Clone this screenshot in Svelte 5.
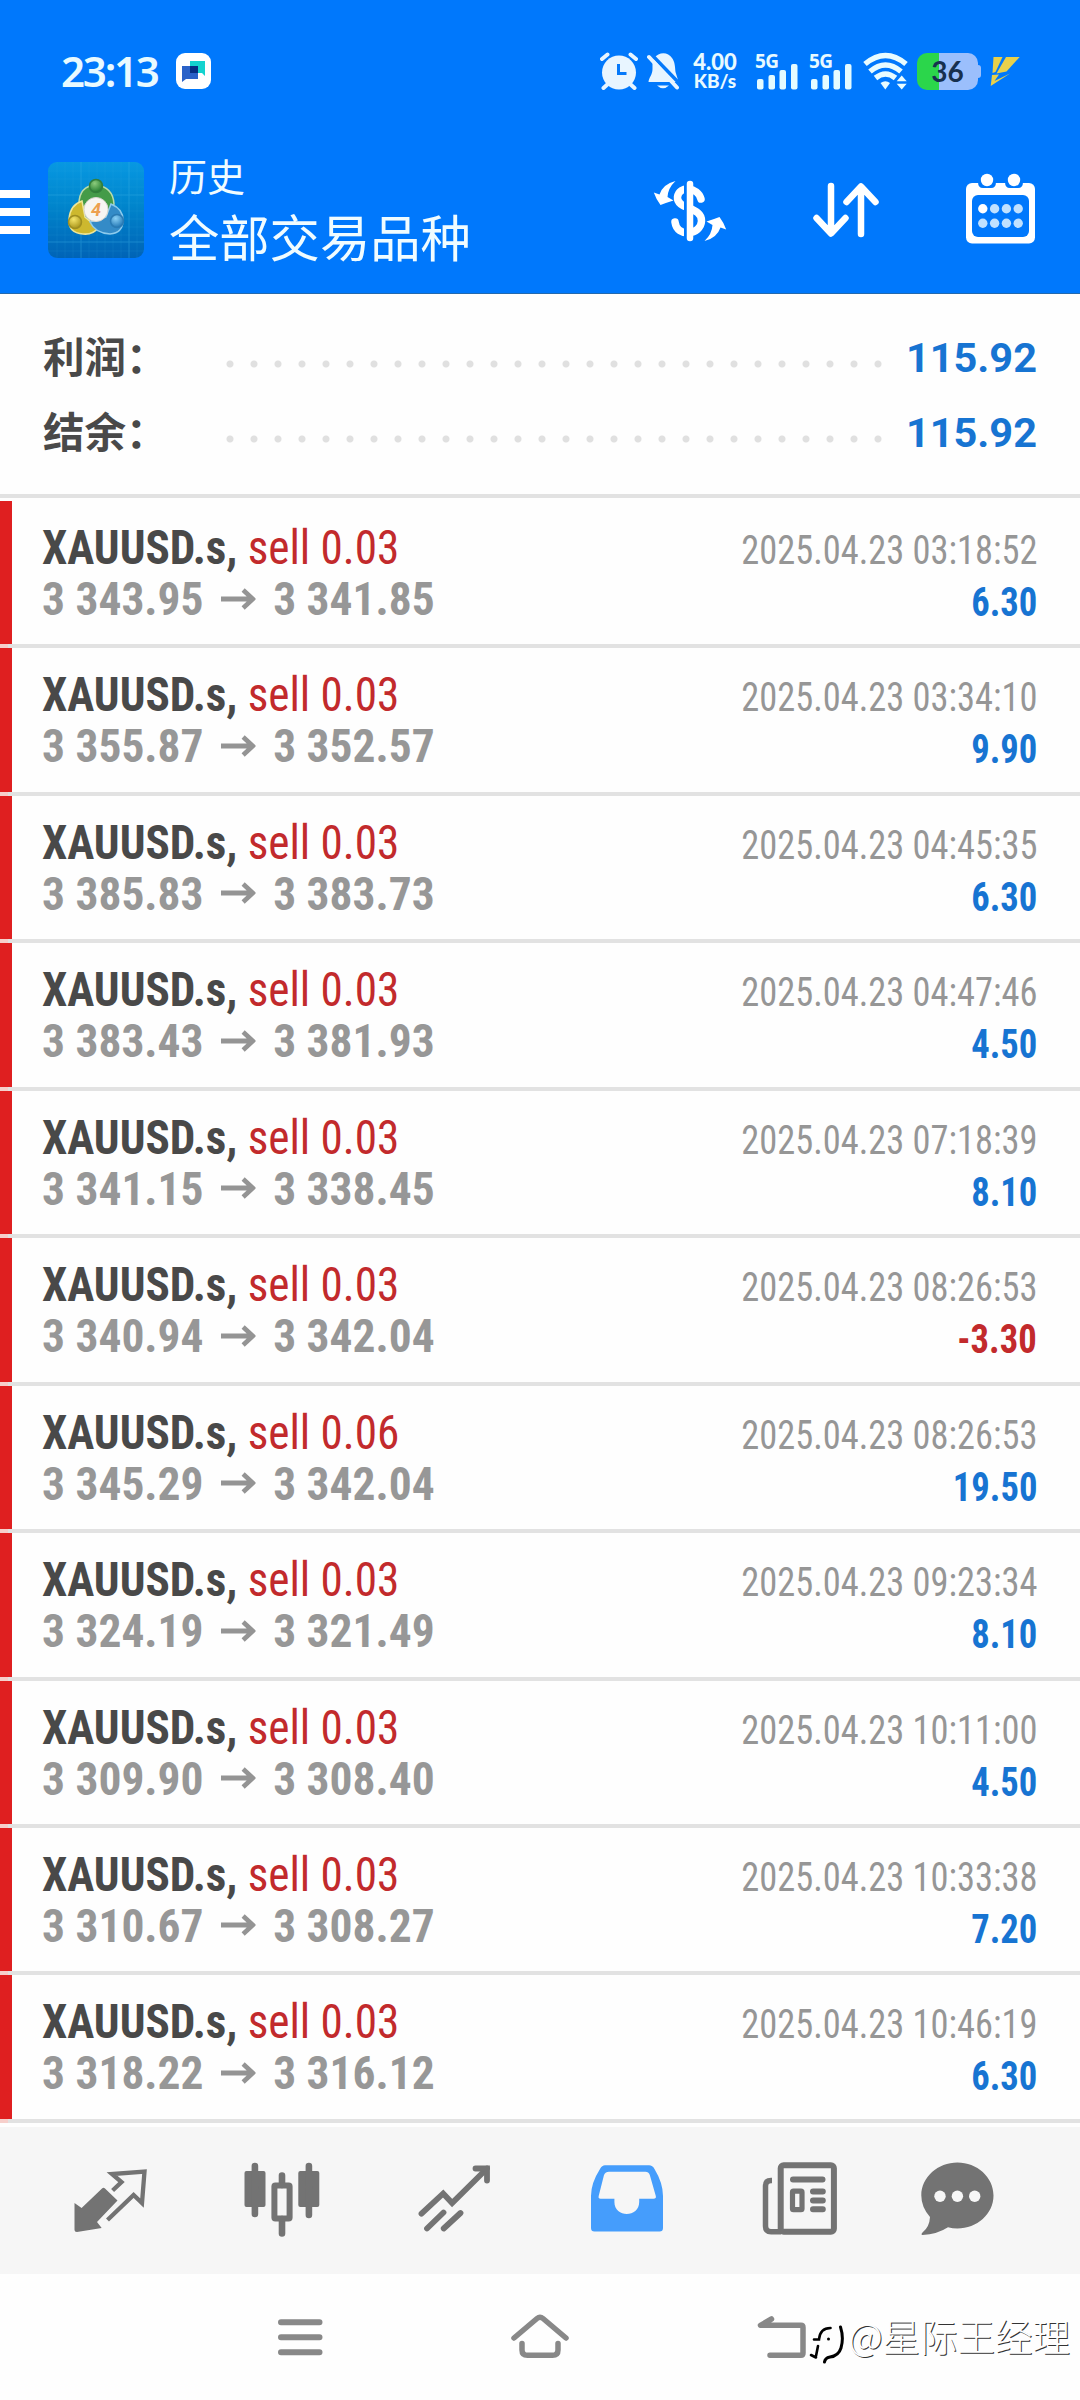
<script lang="ts">
  interface Deal {
    symbol: string;
    side: string;
    volume: string;
    open: string;
    close: string;
    time: string;
    profit: string;
  }

  const deal = (volume: string, open: string, close: string, time: string, profit: string): Deal => ({
    symbol: 'XAUUSD.s',
    side: 'sell',
    volume,
    open,
    close,
    time: `2025.04.23 ${time}`,
    profit,
  });

  const summary = [
    { label: '利润：', value: '115.92' },
    { label: '结余：', value: '115.92' },
  ];

  const deals: Deal[] = [
    deal('0.03', '3 343.95', '3 341.85', '03:18:52', '6.30'),
    deal('0.03', '3 355.87', '3 352.57', '03:34:10', '9.90'),
    deal('0.03', '3 385.83', '3 383.73', '04:45:35', '6.30'),
    deal('0.03', '3 383.43', '3 381.93', '04:47:46', '4.50'),
    deal('0.03', '3 341.15', '3 338.45', '07:18:39', '8.10'),
    deal('0.03', '3 340.94', '3 342.04', '08:26:53', '-3.30'),
    deal('0.06', '3 345.29', '3 342.04', '08:26:53', '19.50'),
    deal('0.03', '3 324.19', '3 321.49', '09:23:34', '8.10'),
    deal('0.03', '3 309.90', '3 308.40', '10:11:00', '4.50'),
    deal('0.03', '3 310.67', '3 308.27', '10:33:38', '7.20'),
    deal('0.03', '3 318.22', '3 316.12', '10:46:19', '6.30'),
  ];

  const calendarDots = [0, 1, 2, 3, 4, 5, 6, 7];
</script>

<div class="screen">
  <header class="header">
    <div class="status">
      <span class="status__clock">23:13</span>
      <svg class="status__app" width="35" height="36" viewBox="0 0 35 36">
        <rect width="35" height="36" rx="9" fill="#fff" />
        <path d="M14 8H29V23L26 20H14Z" fill="#14d3cf" />
        <path d="M6 13H22V26H10L6 29Z" fill="#2a62c8" />
        <path d="M14 13H22V20H14Z" fill="#062f83" />
      </svg>

      <div class="status__icons">
        <svg width="38" height="38" viewBox="600 52 38 38">
          <circle cx="619" cy="72.5" r="17" fill="#e8f5ff" />
          <path d="M602 59L607.5 54.5M630.5 54.5L636 59M603.500 88L609 83M634.500 88L629 83" stroke="#e8f5ff" stroke-width="4" stroke-linecap="round" />
          <path d="M618.500 64V73.500H626.500" fill="none" stroke="#0579fa" stroke-width="3" />
        </svg>
        <svg class="status__bell" width="32" height="38" viewBox="647 52 32 38">
          <path d="M654 58C659 51.500 668 51.500 672 58C675 62 675 67 675.500 72L678 80L676 82H648.500C649 77 652.500 75 652.500 69V64Z" fill="#e8f5ff" />
          <path d="M657 85.500H669Q663 91 657 85.500Z" fill="#e8f5ff" />
          <path d="M651 54L681 85" stroke="#0579fa" stroke-width="3.500" />
          <path d="M649 57L677 87.500" stroke="#e8f5ff" stroke-width="4" stroke-linecap="round" />
        </svg>
        <div class="status__speed">
          <span class="status__rate">4.00</span>
          <span class="status__unit">KB/s</span>
        </div>
        {#each [0, 1] as sim (sim)}
          <div class="status__sim">
            <span>5G</span>
            <svg width="44" height="38" viewBox="754 52 44 38" fill="#e4fbff">
              <rect x="757" y="79" width="6.500" height="10.500" rx="2" />
              <rect x="768.500" y="75" width="6.500" height="14.500" rx="2" />
              <rect x="779.500" y="70" width="6.500" height="19.500" rx="2" />
              <rect x="791" y="64" width="6.500" height="25.500" rx="2" />
            </svg>
          </div>
        {/each}
        <svg class="status__wifi" width="46" height="38" viewBox="862 52 46 38">
          <g fill="none" stroke="#e8fcff" stroke-width="5.500">
            <path d="M865 64Q885.500 47 906 64" />
            <path d="M870 71.500Q885.500 58.500 901 71.500" />
            <path d="M875.500 78Q885.500 70 895.500 78" />
          </g>
          <path d="M880.500 83Q885.500 79.500 890 83L885.300 89.500Z" fill="#e8fcff" />
          <path d="M896.700 81.300L901.700 75.500L906.700 81.300ZM896.700 83.800H906.700L901.700 89.500Z" fill="#e8fcff" />
        </svg>
        <div class="battery"><span>36</span></div>
        <svg class="status__bolt" width="30" height="31" viewBox="990 56 30 31" fill="#e8d04a">
          <path d="M993.500 57H1002.500L995.500 72L992.500 73Z" />
          <path d="M1006 57H1019.700L1006.500 71.500L996.500 73.500Z" />
          <path d="M992 75L999 74.500L994.500 81L1010 73.500L990.700 86Z" />
        </svg>
      </div>
    </div>

    <div class="toolbar">
      <div class="toolbar__menu"><i></i><i></i><i></i></div>
      <svg class="toolbar__logo" width="96" height="96" viewBox="0 0 96 96">
        <defs>
          <linearGradient id="tile" x1="0" y1="0" x2="0" y2="1">
            <stop offset="0" stop-color="#0798e2" />
            <stop offset="0.45" stop-color="#0085cc" />
            <stop offset="1" stop-color="#0063b6" />
          </linearGradient>
          <radialGradient id="green" cx="0.4" cy="0.3" r="0.7">
            <stop offset="0" stop-color="#8ccb7c" />
            <stop offset="1" stop-color="#237c2f" />
          </radialGradient>
          <radialGradient id="yellow" cx="0.4" cy="0.3" r="0.7">
            <stop offset="0" stop-color="#f5e56a" />
            <stop offset="1" stop-color="#a9951b" />
          </radialGradient>
          <radialGradient id="blue" cx="0.4" cy="0.3" r="0.7">
            <stop offset="0" stop-color="#8bd0f5" />
            <stop offset="1" stop-color="#2378b6" />
          </radialGradient>
        </defs>
        <rect width="96" height="96" rx="9" fill="url(#tile)" />
        <path d="M33 0V96M81 0V96M0 33H96M0 80H96" stroke="#3cb2e6" stroke-width="1" opacity="0.4" />
        <path d="M9 0V96M17 0V96M25 0V96M41 0V96M49 0V96M57 0V96M65 0V96M73 0V96M89 0V96M0 9H96M0 17H96M0 25H96M0 41H96M0 49H96M0 57H96M0 65H96M0 73H96M0 89H96" stroke="#3cb2e6" stroke-width="0.6" opacity="0.2" />
        <g stroke-width="1.500">
          <path d="M31 42Q31 24 48 23Q65 25 66 42L61 52L48 42L37 46Z" fill="#449b48" stroke="#b9dba9" />
          <path d="M34 39Q22 43 21 57Q20 71 35 72Q45 73 50 66L37 55Z" fill="#cdb82e" stroke="#eee697" />
          <path d="M63 42Q75 47 75 58Q75 71 62 72Q47 71 42 60L58 55Z" fill="#348bc7" stroke="#8dcbed" />
          <circle cx="48" cy="24" r="6.500" fill="url(#green)" stroke="#337e3c" />
          <circle cx="27" cy="60" r="6.500" fill="url(#yellow)" stroke="#9f8e20" />
          <circle cx="69" cy="59" r="6.500" fill="url(#blue)" stroke="#2a7ab3" />
        </g>
        <circle cx="48" cy="47.500" r="12" fill="#f7f5f2" stroke="#d9d6cf" />
        <text x="48" y="54" text-anchor="middle" font-size="18" font-weight="700" font-style="italic" font-family="Roboto, sans-serif" fill="#eda04f">4</text>
      </svg>
      <div class="toolbar__titles">
        <span class="toolbar__title">历史</span>
        <span class="toolbar__subtitle">全部交易品种</span>
      </div>
      <div class="toolbar__actions">
        <svg width="74" height="64" viewBox="653 178 74 64">
          <path d="M701 198C698 186 679 184 677.500 196C676.500 209 702 205 701.500 220C701 234 677 237 675 221" fill="none" stroke="#fff" stroke-width="7.500" stroke-linecap="round" />
          <path d="M685.500 179V241" stroke="#0078fc" stroke-width="3" />
          <path d="M690 183V237" stroke="#fff" stroke-width="6.500" stroke-linecap="round" />
          <path id="swap" d="M675.500 180Q668 187 667.500 196L673.500 199.500Q667 201.500 660.500 204Q656 198 653.800 191.500L659.500 193.500Q663 183 675.500 180Z" fill="#fff" />
          <use href="#swap" transform="rotate(180 690 210)" />
        </svg>
        <svg width="68" height="58" viewBox="812 181 68 58" fill="none" stroke="#fff" stroke-width="6.500" stroke-linecap="round" stroke-linejoin="round">
          <path d="M831 186V233M816.500 218L831 233.500L845.500 218" />
          <path d="M861 234V187M846.500 202L861 186.500L875.500 202" />
        </svg>
        <svg width="70" height="72" viewBox="965 172 70 72">
          <rect x="966" y="183" width="69" height="60.500" rx="6" fill="#fff" />
          <rect x="972" y="195" width="57" height="42" rx="6" fill="#0078fc" />
          {#each [987, 1014] as x (x)}
            <path d={`M${x - 9} 178V182Q${x - 9} 188 ${x - 4} 188H${x + 4}Q${x + 9} 188 ${x + 9} 182V178Z`} fill="#0078fc" />
            <circle cx={x} cy="180" r="6.200" fill="#fff" />
          {/each}
          {#each calendarDots as dot (dot)}
            <circle cx={982.8 + (dot % 4) * 11.8} cy={dot < 4 ? 208.7 : 223.3} r="4.700" fill={dot === 0 ? '#fff' : '#c0e1ff'} />
          {/each}
        </svg>
      </div>
    </div>
  </header>

  <section class="summary">
    {#each summary as item (item.label)}
      <div class="summary__row">
        <span class="summary__label">{item.label}</span>
        <span class="summary__dots"></span>
        <span class="summary__value">{item.value}</span>
      </div>
    {/each}
  </section>

  <main class="deals">
    {#each deals as item (item.time + item.volume)}
      <article class="deal">
        <div class="deal__body">
          <div class="deal__line">
            <span class="deal__name"><b>{item.symbol},</b> <span class="deal__side">{item.side} {item.volume}</span></span>
            <span class="deal__time">{item.time}</span>
          </div>
          <div class="deal__line">
            <span class="deal__prices">
              {item.open}
              <svg width="36" height="22" viewBox="0 0 36 22" fill="none" stroke="#949494" stroke-width="4.800">
                <path d="M0 11H33M23 2L33 11L23 20" />
              </svg>
              {item.close}
            </span>
            <span class="deal__profit" class:deal__profit--loss={item.profit.startsWith('-')}>{item.profit}</span>
          </div>
        </div>
      </article>
    {/each}
  </main>

  <nav class="tabs">
    <svg width="75" height="76" viewBox="73 2161 75 76">
      <path d="M74.500 2203L81.600 2208L102 2188.500Q103.500 2187 105 2188.500L117.500 2200.500L97 2222L101.700 2228L77 2232Q74.500 2232 74.500 2229.500Z" fill="#737373" />
      <path d="M112.600 2190.500L121.500 2182L112 2174L144.500 2171.500L142 2203L133.600 2195L107.500 2220" fill="none" stroke="#737373" stroke-width="4.300" />
    </svg>
    <svg class="tabs__chart" width="76" height="76" viewBox="244 2161 76 76" fill="#737373">
      <rect x="244.500" y="2171" width="21" height="36" rx="2" />
      <rect x="298.300" y="2171" width="21" height="36" rx="2" />
      <path d="M254.900 2166V2214M308.900 2166V2215M282 2175.500V2185M282 2219V2233.500" stroke="#737373" stroke-width="6.600" stroke-linecap="round" />
      <rect x="274.400" y="2185.500" width="15.200" height="33" rx="1" fill="none" stroke="#737373" stroke-width="6" />
    </svg>
    <svg width="74" height="76" viewBox="418 2161 74 76" fill="none" stroke="#737373" stroke-width="5.800" stroke-linecap="round">
      <path d="M421.500 2213.700L443.200 2193.500L452.100 2203L487 2168.500" />
      <path d="M475.500 2168.500H487V2180.500" />
      <path d="M427 2228.500L443.500 2212.500M443.700 2228.500L460.500 2213" />
    </svg>
    <svg width="74" height="76" viewBox="590 2161 74 76">
      <path fill-rule="evenodd" d="M605 2165.300H649Q652.500 2165.300 654.500 2169Q663 2183 663 2196V2228Q663 2231.500 659.500 2231.500H594.500Q591 2231.500 591 2228V2196Q591 2183 600 2169Q602 2165.300 605 2165.300ZM609 2171.700Q605.500 2171.700 604 2175L598.700 2196Q598 2198.700 600.500 2198.700H614.400V2202C614.400 2218 639.200 2218 639.200 2202V2198.700H653.500Q656.500 2198.700 655.800 2196L649.800 2175Q648.500 2171.700 645.500 2171.700Z" fill="#459dfc" />
    </svg>
    <svg width="76" height="76" viewBox="762 2161 76 76" fill="none" stroke="#737373" stroke-width="6" stroke-linecap="round">
      <rect x="780.700" y="2165.300" width="53.200" height="66.500" rx="3" />
      <path d="M772 2180.500H771Q765.500 2180.500 765.500 2186V2226Q765.500 2231.700 771 2231.700H781" stroke-linecap="butt" stroke-width="5.500" />
      <path d="M793 2179.500H822.500M813 2191.500H822.800M813 2200.500H822.800M813 2209.300H822.800" />
      <rect x="792.500" y="2191.200" width="9.500" height="18.500" rx="1" stroke-width="5.200" />
    </svg>
    <svg class="tabs__chat" width="74" height="76" viewBox="920 2161 74 76">
      <path d="M957.400 2162.500C977 2162.500 993.500 2177 993.500 2195.500C993.500 2214 977 2228.500 957.400 2228.500Q952.500 2228.500 948 2227.300Q937 2234.500 922.500 2235Q920.500 2234.500 922.500 2232.500Q929.500 2227 930 2217Q921.300 2207 921.300 2195.500C921.300 2177 938 2162.500 957.400 2162.500Z" fill="#737373" />
      <g fill="#f7f7f7">
        <circle cx="940" cy="2196.300" r="5.700" />
        <circle cx="957.400" cy="2196.300" r="5.700" />
        <circle cx="974.700" cy="2196.300" r="5.700" />
      </g>
    </svg>
  </nav>

  <div class="system">
    <svg width="46" height="40" viewBox="277 2317 46 40" stroke="#888" stroke-width="6" stroke-linecap="round">
      <path d="M281 2322.300H319.500M281 2337.300H319.500M281 2352.300H319.500" />
    </svg>
    <svg width="60" height="46" viewBox="510 2311 60 46" fill="none" stroke="#888" stroke-width="5.500" stroke-linecap="round">
      <path d="M514 2335L537 2315.500Q540 2313 543 2315.500L566 2335" />
      <path d="M522 2340.500V2347Q522 2352.300 527.500 2352.300H552.500Q558 2352.300 558 2347V2340.500" />
    </svg>
    <svg width="50" height="46" viewBox="755 2311 50 46" fill="none" stroke="#888" stroke-width="5.500" stroke-linecap="round" stroke-linejoin="round">
      <path d="M769.500 2316L758.500 2322.300H799Q801 2322.300 801 2324.500V2350Q801 2352.300 799 2352.300H768" />
    </svg>
    <div class="watermark">
      <svg width="38" height="44" viewBox="803 2321 38 44" fill="none" stroke-linecap="round">
        <path d="M804 2351Q800 2332 812 2325Q824 2319 834 2325Q841 2335 836 2350Q832 2360 820 2362Q822 2357 818 2356Q808 2357 804 2351Z" fill="#fefefe" />
        <path d="M836.500 2327Q840 2338 837 2348Q834.500 2356 826 2357Q821 2358 820.500 2362" stroke="#000" stroke-width="3" />
        <path d="M826.500 2328Q816 2328 815 2339.500H810M814 2346L812 2356M807 2355L812 2357.500" stroke="#000" stroke-width="2.600" />
        <circle cx="824.500" cy="2339" r="1.500" fill="#000" />
      </svg>
      <span>@星际王经理</span>
    </div>
  </div>
</div>

<style>
  :global(body) {
    background: #fefefe;
  }

  .screen {
    display: flex;
    flex-direction: column;
    width: 1080px;
    height: 2400px;
    overflow: hidden;
    background: #fefefe;
    color: #494949;
    font-family: Roboto, 'Noto Sans CJK SC', sans-serif;
  }

  svg {
    display: block;
    flex: none;
  }

  .header {
    box-sizing: border-box;
    height: 294px;
    background: #0078fc;
    border-bottom: 1px solid #2469ad;
    color: #f0fcff;
  }

  .status {
    display: flex;
    align-items: center;
    height: 38px;
    padding: 52px 60px 0 61px;
    color: #e8faff;
  }

  .status__clock {
    width: 98px;
    font: 600 42px/38px 'Noto Sans', sans-serif;
    letter-spacing: -2.2px;
  }

  .status__app {
    margin-left: 17px;
  }

  .status__icons {
    display: flex;
    align-items: center;
    margin-left: auto;
  }

  .status__bell {
    margin-left: 9px;
  }

  .status__speed {
    display: flex;
    flex-direction: column;
    width: 48px;
    margin-left: 12px;
    margin-right: 1px;
    text-align: center;
    font-family: Lato, sans-serif;
    font-weight: 900;
  }

  .status__rate {
    font-size: 22px;
    line-height: 19px;
  }

  .status__unit {
    font-size: 19px;
    line-height: 20px;
  }

  .status__sim {
    position: relative;
    width: 44px;
    margin-left: 14px;
  }

  .status__sim + .status__sim {
    margin-left: 10px;
  }

  .status__sim span {
    position: absolute;
    top: 0;
    left: 1px;
    font: 700 19px/18px 'Noto Sans', sans-serif;
    letter-spacing: -0.5px;
  }

  .status__wifi {
    margin-left: 10px;
  }

  .battery {
    position: relative;
    width: 61px;
    height: 37px;
    margin-left: 9px;
    border-radius: 10px;
    background: linear-gradient(90deg, #2bd64b 22px, #9bbffc 22px);
    color: #17304f;
    text-align: center;
    font: 700 28px/37px Lato, sans-serif;
  }

  .battery::after {
    content: '';
    position: absolute;
    top: 12px;
    right: -3px;
    width: 3px;
    height: 13px;
    border-radius: 0 3px 3px 0;
    background: #9bbffc;
  }

  .status__bolt {
    margin-left: 12px;
  }

  .toolbar {
    display: flex;
    align-items: flex-start;
    padding-top: 59px;
  }

  .toolbar__menu {
    display: flex;
    flex-direction: column;
    gap: 10px;
    width: 30px;
    margin: 41px 18px 0 0;
  }

  .toolbar__menu i {
    height: 8px;
    background: #fff;
  }

  .toolbar__logo {
    margin-top: 13px;
  }

  .toolbar__titles {
    display: flex;
    flex-direction: column;
    margin-left: 25px;
    font-family: 'Noto Sans CJK SC', sans-serif;
    white-space: nowrap;
  }

  .toolbar__title {
    font-size: 38px;
    line-height: 52px;
  }

  .toolbar__subtitle {
    font-size: 50.3px;
    line-height: 69px;
  }

  .toolbar__actions {
    display: flex;
    align-items: flex-end;
    gap: 85px;
    margin: 23px 45px 0 auto;
  }

  .toolbar__actions svg:first-child {
    margin-bottom: 1px;
  }

  .toolbar__actions svg:nth-child(2) {
    margin-bottom: 5px;
  }

  .summary {
    box-sizing: border-box;
    height: 204px;
    padding: 26px 43px 0;
    border-bottom: 4px solid #e2e2e2;
  }

  .summary__row {
    display: flex;
    align-items: center;
    height: 75px;
  }

  .summary__label {
    width: 175px;
    margin-bottom: 4px;
    font: 700 41.5px/69px 'Noto Sans CJK SC', sans-serif;
  }

  .summary__dots {
    width: 672px;
    height: 24px;
    margin-top: 13px;
    background: radial-gradient(circle, #e0e0e0 3px, transparent 4px) 0 0 / 24px 24px;
  }

  .summary__value {
    margin-left: auto;
    color: #1774d2;
    font-size: 41.5px;
    font-weight: 700;
  }

  .deals {
    box-sizing: border-box;
    height: 1629px;
    padding-top: 3px;
  }

  .deal {
    box-sizing: border-box;
    height: 147.45px;
    border-bottom: 4px solid #e2e2e2;
    border-image: linear-gradient(90deg, #f7cfcb 12px, #e2e2e2 12px) 4;
    border-width: 0 0 4px;
    font-stretch: 75%;
  }

  .deal__body {
    box-sizing: border-box;
    height: 100%;
    padding: 21px 43px 0 30px;
    border-left: 12px solid #df1f20;
  }

  .deal__line {
    display: flex;
    align-items: baseline;
    justify-content: space-between;
    height: 51px;
    line-height: 51px;
    white-space: nowrap;
  }

  .deal__name {
    font-size: 48px;
    transform: scaleX(0.941);
    transform-origin: left;
  }

  .deal__side {
    color: #c22a2c;
  }

  .deal__time {
    color: #969696;
    font-size: 40px;
    transform: scaleX(0.91);
    transform-origin: right;
  }

  .deal__prices {
    display: flex;
    align-items: center;
    gap: 18px;
    color: #979797;
    font-size: 47px;
    font-weight: 700;
    transform: scaleX(0.967);
    transform-origin: left;
  }

  .deal__profit {
    color: #1774d2;
    font-size: 40px;
    font-weight: 700;
    transform: translateY(1px) scaleX(0.915);
    transform-origin: right;
  }

  .deal__profit--loss {
    color: #c22a2c;
  }

  .tabs {
    box-sizing: border-box;
    display: flex;
    gap: 98px;
    height: 147px;
    padding: 34px 0 0 73px;
    background: #f6f6f6;
  }

  .tabs__chart {
    margin-left: -2px;
  }

  .tabs__chat {
    margin-left: -16px;
  }

  .system {
    position: relative;
    display: flex;
    align-items: center;
    gap: 187px;
    height: 126px;
    padding-left: 277px;
  }

  .watermark {
    position: absolute;
    top: 47px;
    right: 10px;
    display: flex;
    gap: 3px;
    color: #fefefe;
    font: 300 37.5px/28px 'Noto Sans CJK SC', sans-serif;
    text-shadow: 1px 1px 0 #333;
    white-space: nowrap;
  }
</style>
